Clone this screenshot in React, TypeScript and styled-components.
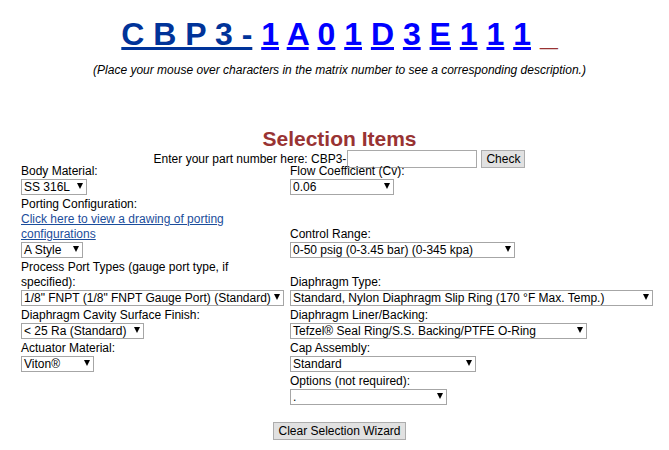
import React from 'react';
import styled, { createGlobalStyle } from 'styled-components';

const GlobalStyle = createGlobalStyle`
  body {
    margin: 8px;
    background: #ffffff;
    color: #000000;
    font-family: "Liberation Sans", Arial, sans-serif;
    font-size: 12px;
  }
`;

const Page = styled.div`
  padding-left: 10px;
`;

const Matrix = styled.div`
  margin-top: 8px;
  text-align: center;
  font-size: 32px;
  font-weight: bold;
  line-height: 37px;
`;

const Prefix = styled.a`
  color: #003399;
  text-decoration: underline;
`;

const CodeChar = styled.a`
  color: #0000ff;
  text-decoration: underline;
`;

const Cursor = styled.span`
  color: #993333;
`;

const Hint = styled.p`
  margin: 10px 0 0;
  text-align: center;
  font-style: italic;
  line-height: 14px;
`;

const Title = styled.h2`
  margin: 51px 0 0;
  text-align: center;
  font-size: 21px;
  line-height: 22px;
  font-weight: bold;
  color: #993333;
`;

const PartRow = styled.div`
  display: flex;
  justify-content: center;
  align-items: center;
  height: 18px;
`;

const PartInput = styled.input`
  box-sizing: border-box;
  width: 130px;
  height: 18px;
  margin: 0 0 0 1px;
  padding: 0 2px;
  border: 1px solid #a9a9a9;
  font: 12px "Liberation Sans", Arial, sans-serif;
`;

const Button = styled.button<{ $gap?: number }>`
  box-sizing: border-box;
  height: 18px;
  margin: 0 0 0 ${p => p.$gap ?? 0}px;
  padding: 0 4px;
  border: 1px solid #adadad;
  border-radius: 0;
  background: #e1e1e1;
  color: #000000;
  font: 12px "Liberation Sans", Arial, sans-serif;
  line-height: 14px;
`;

const Grid = styled.div`
  display: grid;
  grid-template-columns: 269px 1fr;
  align-items: end;
  row-gap: 2px;
  margin: -4px 0 0 3px;
`;

const Cell = styled.div`
  padding-right: 4px;
`;

const Label = styled.div`
  line-height: 15px;
`;

const DrawingLink = styled.a`
  display: block;
  color: #1b4d9b;
  text-decoration: underline;
  line-height: 15px;
`;

const Dropdown = styled.div<{ $width: number }>`
  box-sizing: border-box;
  display: flex;
  align-items: center;
  justify-content: space-between;
  width: ${p => p.$width}px;
  height: 16px;
  padding: 0 3px 0 2px;
  border: 1px solid #a6a6a6;
  background: #ffffff;
  line-height: 14px;
  white-space: nowrap;
  overflow: hidden;
`;

const Arrow = styled.span`
  flex: none;
  width: 0;
  height: 0;
  margin-bottom: 2px;
  border-left: 3px solid transparent;
  border-right: 3px solid transparent;
  border-top: 6px solid #000000;
`;

const Footer = styled.div`
  margin-top: 17px;
  text-align: center;
`;

const codeChars = ['1', 'A', '0', '1', 'D', '3', 'E', '1', '1', '1'];

const Select: React.FC<{ width: number; value: string }> = ({ width, value }) => (
  <Dropdown $width={width}>
    <span>{value}</span>
    <Arrow />
  </Dropdown>
);

const App: React.FC = () => {
  return (
    <Page>
      <GlobalStyle />
      <Matrix>
        <Prefix href="#">C B P 3 -</Prefix>{' '}
        {codeChars.map((c, i) => (
          <React.Fragment key={i}>
            <CodeChar href="#">{c}</CodeChar>{' '}
          </React.Fragment>
        ))}
        <Cursor>_</Cursor>
      </Matrix>
      <Hint>(Place your mouse over characters in the matrix number to see a corresponding description.)</Hint>

      <Title>Selection Items</Title>
      <PartRow>
        <span>Enter your part number here: CBP3-</span>
        <PartInput type="text" />
        <Button $gap={4}>Check</Button>
      </PartRow>

      <Grid>
        <Cell>
          <Label>Body Material:</Label>
          <Select width={66} value="SS 316L" />
        </Cell>
        <Cell>
          <Label>Flow Coefficient (Cv):</Label>
          <Select width={104} value="0.06" />
        </Cell>

        <Cell>
          <Label>Porting Configuration:</Label>
          <DrawingLink href="#">Click here to view a drawing of porting configurations</DrawingLink>
          <Select width={62} value="A Style" />
        </Cell>
        <Cell>
          <Label>Control Range:</Label>
          <Select width={225} value="0-50 psig (0-3.45 bar) (0-345 kpa)" />
        </Cell>

        <Cell>
          <Label>Process Port Types (gauge port type, if specified):</Label>
          <Select width={263} value={'1/8" FNPT (1/8" FNPT Gauge Port) (Standard)'} />
        </Cell>
        <Cell>
          <Label>Diaphragm Type:</Label>
          <Select width={363} value="Standard, Nylon Diaphragm Slip Ring (170 °F Max. Temp.)" />
        </Cell>

        <Cell>
          <Label>Diaphragm Cavity Surface Finish:</Label>
          <Select width={123} value="< 25 Ra (Standard)" />
        </Cell>
        <Cell>
          <Label>Diaphragm Liner/Backing:</Label>
          <Select width={297} value="Tefzel® Seal Ring/S.S. Backing/PTFE O-Ring" />
        </Cell>

        <Cell>
          <Label>Actuator Material:</Label>
          <Select width={73} value="Viton®" />
        </Cell>
        <Cell>
          <Label>Cap Assembly:</Label>
          <Select width={186} value="Standard" />
        </Cell>

        <Cell />
        <Cell>
          <Label>Options (not required):</Label>
          <Select width={157} value="." />
        </Cell>
      </Grid>

      <Footer>
        <Button>Clear Selection Wizard</Button>
      </Footer>
    </Page>
  );
};

export default App;
